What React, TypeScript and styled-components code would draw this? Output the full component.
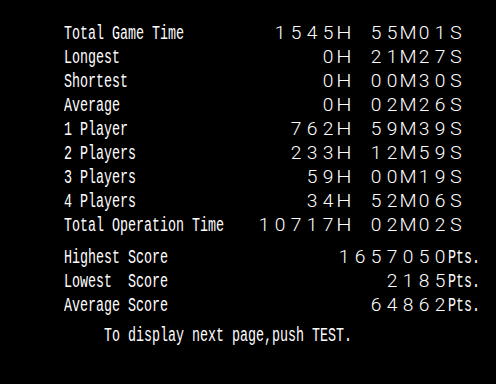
import React from "react";
import styled, { createGlobalStyle } from "styled-components";

const Global = createGlobalStyle`
  html, body {
    margin: 0;
    padding: 0;
    background: #000;
  }
  body {
    width: 496px;
    height: 384px;
    overflow: hidden;
  }
`;

/* The CRT's pixels are narrower than tall: the whole screen is laid out
   at 1.5x width and squeezed horizontally, so an 8px text cell is 12px here. */
const Screen = styled.main`
  width: 744px;
  box-sizing: border-box;
  padding: 21px 0 0 96px;
  transform: scaleX(0.66667);
  transform-origin: 0 0;
  display: flex;
  flex-direction: column;
  font-family: "Liberation Mono", "DejaVu Sans Mono", monospace;
  font-size: 20px;
  line-height: 24px;
  color: #fff;
`;

const Group = styled.section<{ $gap?: number }>`
  display: flex;
  flex-direction: column;
  margin-top: ${(p) => p.$gap ?? 0}px;
`;

const Row = styled.div<{ $width: number }>`
  display: flex;
  justify-content: space-between;
  align-items: baseline;
  width: ${(p) => p.$width}px;
  height: 24px;
  white-space: pre;
`;

const Label = styled.span`
  white-space: pre;
`;

const Value = styled.span`
  display: flex;
  align-items: baseline;
`;

const Cell = styled.span<{ $stretch: number }>`
  display: inline-block;
  width: 24px;
  text-align: center;
  font-family: Roboto, "Liberation Sans", sans-serif;
  font-weight: 300;
  font-size: 18px;
  transform: scaleX(${(p) => p.$stretch});
`;

const Suffix = styled.span`
  white-space: pre;
`;

const Footer = styled.p`
  margin: 7px 0 0 60px;
  white-space: pre;
`;

const stretchFor = (ch: string) => {
  if (ch === "M") return 1.65;
  if (ch === "H") return 1.8;
  if (ch === "S") return 1.65;
  return 1.6;
};

const Wide = ({ text }: { text: string }) => (
  <>
    {text.split("").map((ch, i) => (
      <Cell key={i} $stretch={stretchFor(ch)}>
        {ch === " " ? "\u00a0" : ch}
      </Cell>
    ))}
  </>
);

const times: [string, string][] = [
  ["Total Game Time", "1545H 55M01S"],
  ["Longest", "0H 21M27S"],
  ["Shortest", "0H 00M30S"],
  ["Average", "0H 02M26S"],
  ["1 Player", "762H 59M39S"],
  ["2 Players", "233H 12M59S"],
  ["3 Players", "59H 00M19S"],
  ["4 Players", "34H 52M06S"],
  ["Total Operation Time", "10717H 02M02S"],
];

const scores: [string, string][] = [
  ["Highest Score", "1657050"],
  ["Lowest  Score", "2185"],
  ["Average Score", "64862"],
];

export default function App() {
  return (
    <>
      <Global />
      <Screen>
        <Group>
          {times.map(([label, value]) => (
            <Row key={label} $width={600}>
              <Label>{label}</Label>
              <Value>
                <Wide text={value} />
              </Value>
            </Row>
          ))}
        </Group>
        <Group $gap={8}>
          {scores.map(([label, value]) => (
            <Row key={label} $width={624}>
              <Label>{label}</Label>
              <Value>
                <Wide text={value} />
                <Suffix>Pts.</Suffix>
              </Value>
            </Row>
          ))}
        </Group>
        <Footer>To display next page,push TEST.</Footer>
      </Screen>
    </>
  );
}
